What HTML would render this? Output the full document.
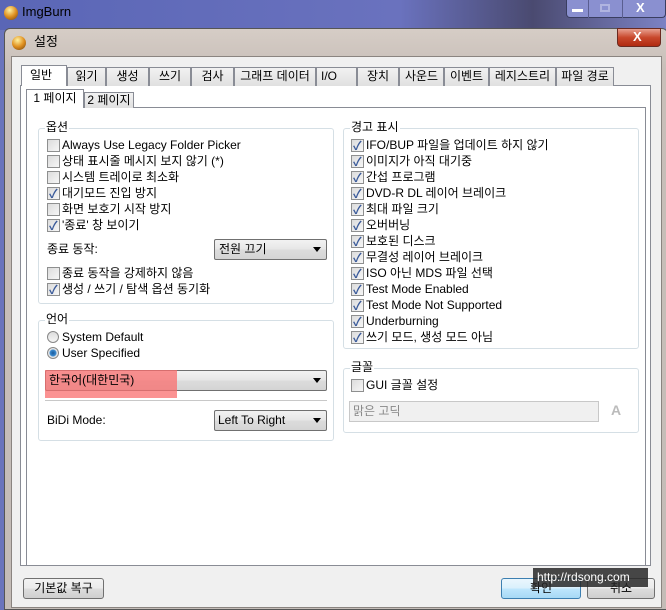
<!DOCTYPE html>
<html><head><meta charset="utf-8">
<style>
*{margin:0;padding:0;box-sizing:border-box}
body{width:666px;height:608px;overflow:hidden;position:relative;font-family:"Liberation Sans","Noto Sans CJK KR",sans-serif;font-size:12px;color:#000;background:#6a74bc}
.a{position:absolute}
.t{position:absolute;white-space:nowrap;line-height:14px}
.cb{position:absolute;width:13px;height:13px;border:1px solid #8e8f8f;background:linear-gradient(135deg,#dcdcdc,#f6f6f6)}
.cb.c::after{content:"✓";position:absolute;left:1px;top:-3px;font-size:12px;font-weight:bold;color:#3a5a9a}
.grp{position:absolute;border:1px solid #d5dfe5;border-radius:3px}
.lg{position:absolute;background:#fff;padding:0 1px;line-height:14px;white-space:nowrap}
.combo{position:absolute;border:1px solid #707070;border-radius:2px;background:linear-gradient(#f2f2f2,#e6e6e6 50%,#dcdcdc 51%,#d4d4d4)}
.combo .ar{position:absolute;right:5px;top:7px;width:0;height:0;border-left:4px solid transparent;border-right:4px solid transparent;border-top:5px solid #000}
.tab{position:absolute;top:67px;height:19px;border:1px solid #898c95;border-bottom:none;background:linear-gradient(#f2f2f2,#e0e0e0);text-align:center;line-height:17px;white-space:nowrap}
.btn{position:absolute;height:21px;border:1px solid #707070;border-radius:3px;background:linear-gradient(#f2f2f2,#ebebeb 50%,#dddddd 51%,#cfcfcf);text-align:center;line-height:19px}
</style></head><body>
<!-- top window title -->
<div class="a" style="left:0;top:0;width:666px;height:30px;background:linear-gradient(90deg,#5a66b6,#6a72be 60%,#4a4a70 80%,#7c82c4)"></div>
<div class="a" style="left:4px;top:6px;width:14px;height:14px;border-radius:50%;background:radial-gradient(circle at 40% 30%,#fff2a0,#e09020 50%,#704010)"></div>
<div class="t" style="left:22px;top:5px;font-size:13px;color:#000">ImgBurn</div>
<div class="a" style="left:566px;top:0;width:100px;height:18px;border:1px solid #3a3e60;border-top:none;border-radius:0 0 4px 4px;background:#8a90d0"></div>
<div class="a" style="left:588px;top:0;width:1px;height:18px;background:#5a5e90"></div>
<div class="a" style="left:622px;top:0;width:1px;height:18px;background:#5a5e90"></div>
<div class="a" style="left:572px;top:9px;width:11px;height:3px;background:#fff"></div>
<div class="a" style="left:600px;top:4px;width:10px;height:8px;border:2px solid #b0b4e0"></div>
<div class="t" style="left:636px;top:1px;font-weight:bold;font-size:13px;color:#fff">X</div>
<!-- dialog frame -->
<div class="a" style="left:4px;top:28px;width:664px;height:582px;border:1px solid #555;border-radius:6px 6px 0 0;background:linear-gradient(#d6cdc6,#c8bfb9 40px,#c4bcb7)"></div>
<div class="a" style="left:12px;top:36px;width:14px;height:14px;border-radius:50%;background:radial-gradient(circle at 40% 30%,#fff2a0,#e09020 50%,#704010)"></div>
<div class="t" style="left:34px;top:35px;font-size:13px">설정</div>
<div class="a" style="left:617px;top:28px;width:44px;height:19px;border:1px solid #6a2a20;border-radius:0 0 4px 4px;background:linear-gradient(#e8a090,#c8482c 50%,#b02a10)"></div>
<div class="t" style="left:633px;top:30px;font-weight:bold;font-size:13px;color:#fff">X</div>
<!-- client -->
<div class="a" style="left:11px;top:56px;width:651px;height:552px;background:#f0f0f0;border:1px solid #8a8480"></div>
<!-- tab page -->
<div class="a" style="left:20px;top:85px;width:631px;height:481px;background:#fff;border:1px solid #898c95"></div>
<div class="tab" style="left:67px;width:39px">읽기</div>
<div class="tab" style="left:106px;width:43px">생성</div>
<div class="tab" style="left:149px;width:42px">쓰기</div>
<div class="tab" style="left:191px;width:43px">검사</div>
<div class="tab" style="left:234px;width:82px">그래프 데이터</div>
<div class="tab" style="left:316px;width:41px;text-align:left;padding-left:4px">I/O</div>
<div class="tab" style="left:357px;width:42px">장치</div>
<div class="tab" style="left:399px;width:45px">사운드</div>
<div class="tab" style="left:444px;width:45px">이벤트</div>
<div class="tab" style="left:489px;width:67px">레지스트리</div>
<div class="tab" style="left:556px;width:58px">파일 경로</div>
<div class="tab" style="left:21px;top:65px;width:46px;height:21px;background:#fff;text-align:left;padding-left:8px;line-height:19px">일반</div>
<!-- subtabs -->
<div class="a" style="left:26px;top:107px;width:620px;height:459px;border:1px solid #898c95;background:#fff"></div>
<div class="tab" style="left:84px;top:92px;width:50px;height:16px;line-height:14px">2 페이지</div>
<div class="tab" style="left:26px;top:89px;width:58px;height:19px;background:#fff;line-height:17px">1 페이지</div>

<!-- 옵션 -->
<div class="grp" style="left:38px;top:128px;width:296px;height:176px"></div>
<div class="lg" style="left:45px;top:120px">옵션</div>
<div class="cb" style="left:47px;top:139px"></div><div class="t" style="left:62px;top:138px">Always Use Legacy Folder Picker</div>
<div class="cb" style="left:47px;top:155px"></div><div class="t" style="left:62px;top:154px">상태 표시줄 메시지 보지 않기 (*)</div>
<div class="cb" style="left:47px;top:171px"></div><div class="t" style="left:62px;top:170px">시스템 트레이로 최소화</div>
<div class="cb c" style="left:47px;top:187px"></div><div class="t" style="left:62px;top:186px">대기모드 진입 방지</div>
<div class="cb" style="left:47px;top:203px"></div><div class="t" style="left:62px;top:202px">화면 보호기 시작 방지</div>
<div class="cb c" style="left:47px;top:219px"></div><div class="t" style="left:62px;top:218px">'종료' 창 보이기</div>
<div class="t" style="left:47px;top:242px">종료 동작:</div>
<div class="combo" style="left:214px;top:239px;width:113px;height:21px"><div class="t" style="left:4px;top:2px">전원 끄기</div><div class="ar"></div></div>
<div class="cb" style="left:47px;top:267px"></div><div class="t" style="left:62px;top:266px">종료 동작을 강제하지 않음</div>
<div class="cb c" style="left:47px;top:283px"></div><div class="t" style="left:62px;top:282px">생성 / 쓰기 / 탐색 옵션 동기화</div>

<!-- 언어 -->
<div class="grp" style="left:38px;top:320px;width:296px;height:121px"></div>
<div class="lg" style="left:45px;top:312px">언어</div>
<div class="a" style="left:47px;top:331px;width:12px;height:12px;border:1px solid #888;border-radius:50%;background:linear-gradient(#ddd,#f6f6f6)"></div>
<div class="t" style="left:62px;top:330px">System Default</div>
<div class="a" style="left:47px;top:347px;width:12px;height:12px;border:1px solid #888;border-radius:50%;background:radial-gradient(circle,#1a5a9a 0,#3a8ad0 3px,#e8e8e8 4px)"></div>
<div class="t" style="left:62px;top:346px">User Specified</div>
<div class="combo" style="left:45px;top:370px;width:282px;height:21px"><div class="ar"></div></div>
<div class="a" style="left:45px;top:370px;width:132px;height:28px;background:rgba(250,110,110,0.75)"></div>
<div class="t" style="left:49px;top:373px">한국어(대한민국)</div>
<div class="a" style="left:45px;top:400px;width:282px;height:1px;background:#c8c8c8"></div>
<div class="t" style="left:47px;top:413px">BiDi Mode:</div>
<div class="combo" style="left:214px;top:410px;width:113px;height:21px"><div class="t" style="left:3px;top:2px">Left To Right</div><div class="ar"></div></div>

<!-- 경고 표시 -->
<div class="grp" style="left:343px;top:128px;width:296px;height:221px"></div>
<div class="lg" style="left:350px;top:120px">경고 표시</div>
<div class="cb c" style="left:351px;top:139px"></div><div class="t" style="left:366px;top:138px">IFO/BUP 파일을 업데이트 하지 않기</div>
<div class="cb c" style="left:351px;top:155px"></div><div class="t" style="left:366px;top:154px">이미지가 아직 대기중</div>
<div class="cb c" style="left:351px;top:171px"></div><div class="t" style="left:366px;top:170px">간섭 프로그램</div>
<div class="cb c" style="left:351px;top:187px"></div><div class="t" style="left:366px;top:186px">DVD-R DL 레이어 브레이크</div>
<div class="cb c" style="left:351px;top:203px"></div><div class="t" style="left:366px;top:202px">최대 파일 크기</div>
<div class="cb c" style="left:351px;top:219px"></div><div class="t" style="left:366px;top:218px">오버버닝</div>
<div class="cb c" style="left:351px;top:235px"></div><div class="t" style="left:366px;top:234px">보호된 디스크</div>
<div class="cb c" style="left:351px;top:251px"></div><div class="t" style="left:366px;top:250px">무결성 레이어 브레이크</div>
<div class="cb c" style="left:351px;top:267px"></div><div class="t" style="left:366px;top:266px">ISO 아닌 MDS 파일 선택</div>
<div class="cb c" style="left:351px;top:283px"></div><div class="t" style="left:366px;top:282px">Test Mode Enabled</div>
<div class="cb c" style="left:351px;top:299px"></div><div class="t" style="left:366px;top:298px">Test Mode Not Supported</div>
<div class="cb c" style="left:351px;top:315px"></div><div class="t" style="left:366px;top:314px">Underburning</div>
<div class="cb c" style="left:351px;top:331px"></div><div class="t" style="left:366px;top:330px">쓰기 모드, 생성 모드 아님</div>

<!-- 글꼴 -->
<div class="grp" style="left:343px;top:368px;width:296px;height:65px"></div>
<div class="lg" style="left:350px;top:360px">글꼴</div>
<div class="cb" style="left:351px;top:379px"></div><div class="t" style="left:366px;top:378px">GUI 글꼴 설정</div>
<div class="a" style="left:349px;top:401px;width:250px;height:21px;border:1px solid #c8c8c8;background:#f0f0f0"></div>
<div class="t" style="left:353px;top:404px;color:#888">맑은 고딕</div>
<div class="t" style="left:611px;top:403px;color:#bbb;font-size:14px;font-weight:bold">A</div>

<!-- bottom buttons -->
<div class="btn" style="left:23px;top:578px;width:81px">기본값 복구</div>
<div class="btn" style="left:501px;top:578px;width:80px;border-color:#3c7fb1;background:linear-gradient(#eaf6fd,#d9f0fc 50%,#bee6fd 51%,#a7d9f5)">확인</div>
<div class="btn" style="left:587px;top:578px;width:68px">취소</div>
<div class="a" style="left:533px;top:568px;width:115px;height:19px;background:rgba(40,40,40,0.85)"></div>
<div class="t" style="left:537px;top:570px;color:#fff;font-size:12px">http://rdsong.com</div>
</body></html>
